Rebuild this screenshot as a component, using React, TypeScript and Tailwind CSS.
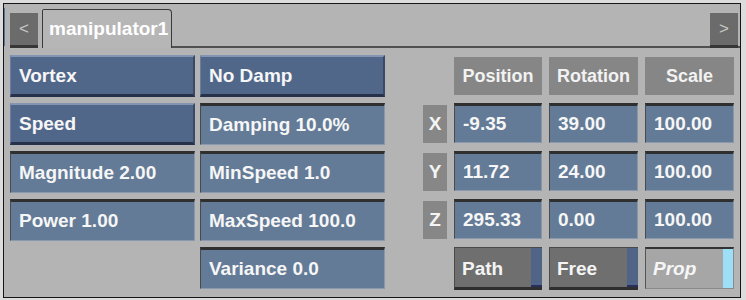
import React from "react";

const font = { fontFamily: '"Liberation Sans", Arial, sans-serif' };

function Raised({ children }: { children?: React.ReactNode }) {
  return (
    <div className="h-[42px] bg-[#51678a] border-t-2 border-t-[#8395b3] border-l border-l-[#6a7f9f] border-r-2 border-r-[#3a4a66] border-b-[3px] border-b-[#27324a] flex items-center pl-[8px] pt-[2px] text-[19px] font-bold text-[#f6f6f6]">
      {children}
    </div>
  );
}

function Inset({ children, h = "h-[42px]" }: { children?: React.ReactNode; h?: string }) {
  return (
    <div className={`${h} bg-[#637b97] border-t-[3px] border-t-[#2f2f2f] border-l border-l-[#4a4a4a] border-r border-r-[#8797ac] border-b border-b-[#8a99ad] flex items-center pl-[8px] pt-[1px] text-[19px] font-bold text-[#f6f6f6]`}>
      {children}
    </div>
  );
}

function Header({ children }: { children?: React.ReactNode }) {
  return (
    <div className="h-[38px] self-center bg-[#868686] flex items-center justify-center pt-[1px] text-[18px] font-bold text-[#f2f2f2]">
      {children}
    </div>
  );
}

function Label({ children }: { children?: React.ReactNode }) {
  return (
    <div className="h-[38px] self-center bg-[#878787] flex items-center justify-center pt-[1px] text-[19px] font-bold text-[#f4f4f4]">
      {children}
    </div>
  );
}

function GrayBtn({ children }: { children?: React.ReactNode }) {
  return (
    <div className="h-[43px] flex border-l border-l-[#4a4a4a] border-t border-t-[#4a4a4a] border-b-[3px] border-b-[#2e2e2e]">
      <div className="flex-1 bg-[#6f6f6f] flex items-center pl-[7px] pt-[3px] text-[19px] font-bold text-[#f4f4f4]">
        {children}
      </div>
      <div className="w-[11px] bg-[#4f6487] border-b-2 border-b-[#26305a]" />
    </div>
  );
}

export default function App() {
  return (
    <div style={font} className="w-[746px] h-[300px] bg-[#dcdcdc] pt-[3px] pl-[3px] pr-[5px] pb-[2px]">
      <div className="h-full border border-[#161616] bg-[#b4b4b4] flex flex-col">
        {/* tab bar */}
        <div className="h-[44px] flex items-end">
          <div className="w-[1px] h-[38px] mb-[2px] bg-[#5b7394]" />
          <div className="ml-[5px] w-[28px] h-[35px] bg-[#6b6b6b] border-b-[3px] border-b-[#363636] flex items-center justify-center text-[17px] text-[#c9c9c9]">
            &lt;
          </div>
          <div className="ml-[4px] w-[130px] h-[39px] border border-b-0 border-[#3a3a3a] rounded-tr-[4px] rounded-tl-[2px] bg-[#b6b6b6] flex items-center pl-[6px] pt-[1px] text-[19px] font-bold text-white">
            manipulator1
          </div>
          <div className="flex-1 h-full border-b-2 border-b-[#505050]" />
          <div className="w-[28px] h-[35px] bg-[#6b6b6b] border-b-[3px] border-b-[#363636] flex items-center justify-center text-[17px] text-[#c9c9c9]">
            &gt;
          </div>
          <div className="w-[2px] h-full border-b-2 border-b-[#505050]" />
        </div>

        {/* body */}
        <div className="flex pl-[6px] pt-[7px]">
          <div className="grid grid-cols-[185px_185px] auto-rows-[42px] gap-x-[5px] gap-y-[6px]">
            <Raised>Vortex</Raised>
            <Raised>No Damp</Raised>
            <Raised>Speed</Raised>
            <Inset>Damping 10.0%</Inset>
            <Inset>Magnitude 2.00</Inset>
            <Inset>MinSpeed 1.0</Inset>
            <Inset>Power 1.00</Inset>
            <Inset>MaxSpeed 100.0</Inset>
            <div />
            <Inset>Variance 0.0</Inset>
          </div>

          <div className="ml-[38px] grid grid-cols-[24px_88px_89px_89px] auto-rows-[42px] gap-x-[7px] gap-y-[6px]">
            <div />
            <Header>Position</Header>
            <Header>Rotation</Header>
            <Header>Scale</Header>

            <Label>X</Label>
            <Inset h="h-[40px]">-9.35</Inset>
            <Inset h="h-[40px]">39.00</Inset>
            <Inset h="h-[40px]">100.00</Inset>

            <Label>Y</Label>
            <Inset h="h-[40px]">11.72</Inset>
            <Inset h="h-[40px]">24.00</Inset>
            <Inset h="h-[40px]">100.00</Inset>

            <Label>Z</Label>
            <Inset h="h-[40px]">295.33</Inset>
            <Inset h="h-[40px]">0.00</Inset>
            <Inset h="h-[40px]">100.00</Inset>

            <div />
            <GrayBtn>Path</GrayBtn>
            <GrayBtn>Free</GrayBtn>
            <div className="h-[42px] flex bg-[#a6a6a6] border-t-2 border-t-[#333333] border-l border-l-[#555555] border-r border-r-[#8a8a8a] border-b border-b-[#8a8a8a]">
              <div className="flex-1 flex items-center pl-[7px] pt-[2px] text-[19px] font-bold italic text-[#f6f6f6]">
                Prop
              </div>
              <div className="w-[10px] bg-[#9ddff6]" />
            </div>
          </div>
        </div>
      </div>
    </div>
  );
}
